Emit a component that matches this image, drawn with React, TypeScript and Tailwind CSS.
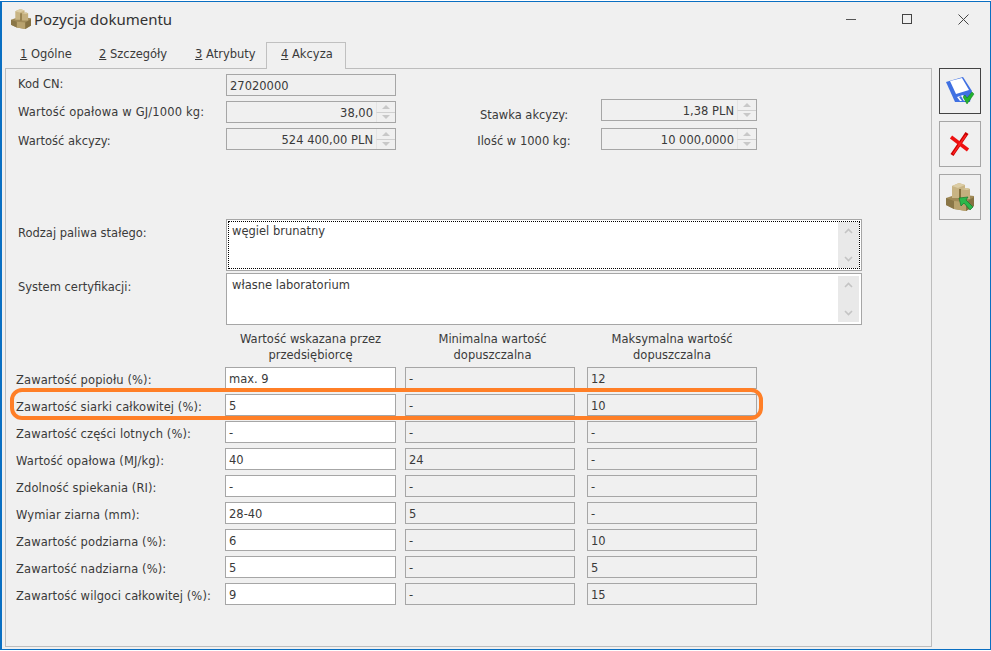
import React from 'react';

const rows = [
  { label: 'Zawartość popiołu (%):', a: 'max. 9', b: '-', c: '12' },
  { label: 'Zawartość siarki całkowitej (%):', a: '5', b: '-', c: '10' },
  { label: 'Zawartość części lotnych (%):', a: '-', b: '-', c: '-' },
  { label: 'Wartość opałowa (MJ/kg):', a: '40', b: '24', c: '-' },
  { label: 'Zdolność spiekania (RI):', a: '-', b: '-', c: '-' },
  { label: 'Wymiar ziarna (mm):', a: '28-40', b: '5', c: '-' },
  { label: 'Zawartość podziarna (%):', a: '6', b: '-', c: '10' },
  { label: 'Zawartość nadziarna (%):', a: '5', b: '-', c: '5' },
  { label: 'Zawartość wilgoci całkowitej (%):', a: '9', b: '-', c: '15' },
];

function Boxes({ size, arrow }: { size: number; arrow?: boolean }) {
  return (
    <svg width={size} height={size} viewBox="0 0 28 28">
      <path d="M0 15l9-3h10l9 1v10l-8 5-12-2-8-4z" fill="#a08a58" />
      <path d="M8 18l12 1v9l-12-2z" fill="#b8a26e" />
      <path d="M20 19l8-5v9l-8 5z" fill="#857142" />
      <path d="M0 15l8 3v8l-8-4z" fill="#8a7647" />
      <path d="M6 3l7-3 6 2v13H6z" fill="#c8b484" />
      <path d="M6 3l7-3 6 2-7 3z" fill="#dccda5" />
      <path d="M13 6h3v10h-3z" fill="#86713f" />
      <path d="M15 6l6-1 3 1v10h-9z" fill="#c4af7e" />
      <path d="M15 6l6-1 3 1-3 1z" fill="#d8c99f" />
      {arrow && (
        <path d="M13 15l9-1-2 3 7 7-3 3-6-7-3 3z" fill="#2bb84a" stroke="#14792c" strokeWidth="0.7" />
      )}
    </svg>
  );
}

function SaveIcon() {
  return (
    <svg width="30" height="30" viewBox="0 0 30 30">
      <path d="M1 6l17-5 9 14-2 11H10z" fill="#3f70e2" />
      <path d="M5 5l12-3 7 12-13 4z" fill="#ffffff" />
      <path d="M12 21l6-2 4 6h-7z" fill="#ffffff" />
      <path d="M14 21l2-1 3 5h-2z" fill="#3f70e2" />
      <path d="M18 21l2-2 2 3 5-6 2 2-7 10z" fill="#22b32e" stroke="#107a1a" strokeWidth="0.5" />
    </svg>
  );
}

function CrossIcon() {
  return (
    <svg width="22" height="26" viewBox="0 0 22 26">
      <path d="M3 24L18 2" stroke="#c80000" strokeWidth="3.6" />
      <path d="M2 6l17 13" stroke="#ee1010" strokeWidth="3.6" />
      <path d="M4 23L17 4" stroke="#ff2020" strokeWidth="1.4" />
    </svg>
  );
}

function Chevron({ down }: { down?: boolean }) {
  return (
    <svg width="9" height="6" viewBox="0 0 9 6">
      <path d={down ? 'M1 1l3.5 3.5L8 1' : 'M1 5l3.5-3.5L8 5'} fill="none" stroke="#c4c4c4" strokeWidth="1.6" />
    </svg>
  );
}

function Tri({ down }: { down?: boolean }) {
  return (
    <svg width="8" height="4" viewBox="0 0 8 4">
      <path d={down ? 'M0 0h8L4 4z' : 'M0 4h8L4 0z'} fill="#c8c8c8" />
    </svg>
  );
}

function Spin({ value, className }: { value: string; className: string }) {
  return (
    <div className={`flex h-[22px] border border-[#a6a6a6] ${className}`}>
      <div className="flex-1 pr-[3px] pt-[2px] text-right leading-[18px]">{value}</div>
      <div className="flex w-[19px] flex-col">
        <div className="flex flex-1 items-center justify-center border-b border-[#d0d0d0] border-l border-l-[#e4e4e4]">
          <Tri />
        </div>
        <div className="flex flex-1 items-center justify-center border-l border-[#e4e4e4]">
          <Tri down />
        </div>
      </div>
    </div>
  );
}

function Memo({ value, focused }: { value: string; focused?: boolean }) {
  return (
    <div className="relative ml-auto h-[52px] w-[636px] border border-[#a6a6a6] bg-white p-[1px]">
      <div className={`flex h-full pl-[4px] ${focused ? 'outline outline-1 -outline-offset-1 outline-dotted outline-black' : ''}`}>
        <div className="flex-1 pt-[1px] leading-[18px]">{value}</div>
        <div className="my-[1px] mr-[1px] flex w-[21px] flex-col items-center justify-between bg-[#e9e9e9] py-[6px]">
          <Chevron />
          <Chevron down />
        </div>
      </div>
    </div>
  );
}

function Cell({ value, white, className }: { value: string; white?: boolean; className?: string }) {
  return (
    <div className={`h-[22px] border border-[#a6a6a6] pl-[3px] pt-[2px] leading-[18px] ${white ? 'bg-white' : ''} ${className ?? ''}`}>
      {value}
    </div>
  );
}

function Tab({ n, label, active, className }: { n: string; label: string; active?: boolean; className: string }) {
  return (
    <div
      className={`flex h-[27px] items-center pb-[2px] ${active ? 'relative z-10 border border-b-0 border-[#c0c0c0] bg-[#f0f0f0] pl-[14px]' : ''} ${className}`}
    >
      <span className="underline">{n}</span>
      <span>&nbsp;{label}</span>
    </div>
  );
}

export default function App() {
  return (
    <div className="h-[651px] w-[991px] overflow-hidden bg-white font-['DejaVu_Sans',sans-serif] text-[11.5px] text-[#3a3a3a]">
      <div className="mt-[1px] flex h-[649px] w-[991px] flex-col border border-l-2 border-[#0a6fc2] bg-[#f0f0f0]">
        <div className="flex h-[40px] items-center pb-[6px] pl-[9px]">
          <Boxes size={20} />
          <span className="ml-[3px] font-['Noto_Sans',sans-serif] text-[15px] text-[#333]">Pozycja dokumentu</span>
          <div className="ml-auto flex items-center">
            <div className="h-px w-[10px] bg-[#555]" />
            <div className="ml-[46px] h-[10px] w-[10px] border border-[#444]" />
            <svg className="ml-[46px] mr-[21px]" width="11" height="11" viewBox="0 0 11 11">
              <path d="M0.5 0.5l10 10M10.5 0.5l-10 10" stroke="#444" fill="none" />
            </svg>
          </div>
        </div>

        <div className="relative flex h-[27px] pl-[18px]">
          <Tab n="1" label="Ogólne" className="w-[79px]" />
          <Tab n="2" label="Szczegóły" className="w-[96px]" />
          <Tab n="3" label="Atrybuty" className="w-[71px]" />
          <Tab n="4" label="Akcyza" active className="w-[80px]" />
        </div>

        <div className="flex flex-1 pb-[2px] pl-[3px]">
          <div className="-mt-px h-[579px] w-[927px] border border-[#bdbdbd]">
            <div className="flex pl-[12px] pt-[5px]">
              <div className="w-[378px]">
                <div className="flex h-[22px] justify-between">
                  <span className="pt-[1px] leading-[18px]">Kod CN:</span>
                  <Cell value="27020000" className="w-[170px]" />
                </div>
                <div className="mt-[5px] flex h-[22px] justify-between">
                  <span className="pt-[2px] leading-[18px] tracking-[0.16px]">Wartość opałowa w GJ/1000 kg:</span>
                  <Spin value="38,00" className="w-[170px]" />
                </div>
                <div className="mt-[5px] flex h-[22px] justify-between">
                  <span className="pt-[4px] leading-[18px]">Wartość akcyzy:</span>
                  <Spin value="524 400,00 PLN" className="w-[170px]" />
                </div>
              </div>
              <div className="ml-[79px] w-[282px] pt-[25px]">
                <div className="flex h-[22px] items-center">
                  <span className="w-[98px] pt-[9px] text-center leading-[18px]">Stawka akcyzy:</span>
                  <Spin value="1,38 PLN" className="ml-[28px] w-[156px]" />
                </div>
                <div className="mt-[7px] flex h-[22px] items-center">
                  <span className="w-[98px] pt-[4px] text-center leading-[18px]">Ilość w 1000 kg:</span>
                  <Spin value="10 000,0000" className="ml-[28px] w-[156px]" />
                </div>
              </div>
            </div>

            <div className="mt-[69px] w-[856px] pl-[12px]">
              <div className="flex">
                <span className="absolute pt-[5px] leading-[18px]">Rodzaj paliwa stałego:</span>
                <Memo value="węgiel brunatny" focused />
              </div>
              <div className="mt-[2px] flex">
                <span className="absolute pt-[5px] leading-[18px]">System certyfikacji:</span>
                <Memo value="własne laboratorium" />
              </div>
            </div>

            <div className="relative mt-[6px] pl-[10px]">
              <div className="flex h-[36px] text-center leading-[16px]">
                <div className="ml-[209px] w-[171px]">Wartość wskazana przez<br />przedsiębiorcę</div>
                <div className="ml-[9px] w-[170px] pl-[5px]">Minimalna wartość<br />dopuszczalna</div>
                <div className="ml-[12px] w-[170px]">Maksymalna wartość<br />dopuszczalna</div>
              </div>
              <div className="flex flex-col gap-[5px]">
                {rows.map((r) => (
                  <div key={r.label} className="flex h-[22px]">
                    <span className="w-[209px] whitespace-nowrap pt-[4px] leading-[18px] tracking-[0.1px]">{r.label}</span>
                    <Cell value={r.a} white className="w-[171px]" />
                    <Cell value={r.b} className="ml-[9px] w-[170px]" />
                    <Cell value={r.c} className="ml-[12px] w-[170px]" />
                  </div>
                ))}
              </div>
              <div className="absolute left-[4px] top-[57px] h-[32px] w-[753px] rounded-[12px] border-[4px] border-[#ff7f27]" />
            </div>
          </div>

          <div className="ml-[7px] flex flex-col gap-[7px]">
            <div className="-mt-px flex h-[46px] w-[42px] items-center justify-center border-[1.5px] border-[#444]">
              <SaveIcon />
            </div>
            <div className="flex h-[46px] w-[42px] items-center justify-center border border-[#a6a6a6]">
              <CrossIcon />
            </div>
            <div className="flex h-[46px] w-[42px] items-center justify-center border border-[#a6a6a6]">
              <Boxes size={28} arrow />
            </div>
          </div>
        </div>
      </div>
    </div>
  );
}
